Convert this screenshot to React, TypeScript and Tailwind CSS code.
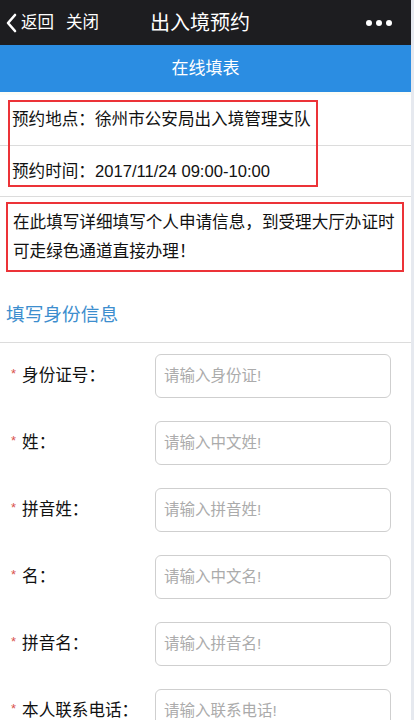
const fields = [
  { label: "身份证号：", placeholder: "请输入身份证!" },
  { label: "姓：", placeholder: "请输入中文姓!" },
  { label: "拼音姓：", placeholder: "请输入拼音姓!" },
  { label: "名：", placeholder: "请输入中文名!" },
  { label: "拼音名：", placeholder: "请输入拼音名!" },
  { label: "本人联系电话：", placeholder: "请输入联系电话!" },
  { label: "联系地址：", placeholder: "请输入联系地址!" },
];

export default function App() {
  return (
    <div
      className="flex min-h-screen bg-[#e6e9ef]"
      style={{ fontFamily: '"Liberation Sans", "Noto Sans CJK SC", sans-serif' }}
    >
      <div className="w-[411px] bg-white">
        {/* top nav */}
        <header className="relative flex h-[45px] items-center bg-[#1d1d20] text-white">
          <div className="flex items-center pl-[5px]">
            <svg width="13" height="20" viewBox="0 0 13 20" className="mr-[3px]">
              <path d="M10 2 L3 10 L10 18" fill="none" stroke="white" strokeWidth="2.6" strokeLinecap="round" strokeLinejoin="round" />
            </svg>
            <span className="text-[16.5px] leading-none">返回</span>
            <span className="ml-[12px] text-[16.5px] leading-none">关闭</span>
          </div>
          <h1 className="absolute left-[150px] text-[20px] leading-none">出入境预约</h1>
          <div className="ml-auto mr-[19px] flex gap-[4px]">
            <span className="h-[6px] w-[6px] rounded-full bg-white" />
            <span className="h-[6px] w-[6px] rounded-full bg-white" />
            <span className="h-[6px] w-[6px] rounded-full bg-white" />
          </div>
        </header>

        <div className="flex h-[47px] items-center justify-center bg-[#2b8de2] text-[17px] text-white">
          在线填表
        </div>
        <div className="h-[3px] bg-[#fdfdf6]" />

        {/* appointment info */}
        <div className="relative">
          <div className="flex h-[51px] items-center border-b border-[#dcdcdc] pl-[12px] text-[16.6px] text-[#111]">
            预约地点：徐州市公安局出入境管理支队
          </div>
          <div className="flex h-[51px] items-center border-b border-[#dcdcdc] pl-[12px] pt-[3px] text-[16.6px] text-[#111]">
            预约时间：2017/11/24 09:00-10:00
          </div>
          <div className="absolute left-[8px] top-[5px] h-[87px] w-[310px] border-2 border-[#ec3338]" />
        </div>

        <div className="ml-[6px] mr-[7px] mt-[5px] border-2 border-[#ec3338] py-[4px] pl-[5px] text-[16.6px] leading-[29px] text-[#111]">
          在此填写详细填写个人申请信息，到受理大厅办证时可走绿色通道直接办理！
        </div>

        {/* section title */}
        <div className="flex h-[71px] items-end border-b border-[#dcdcdc] pb-[17px] pl-[6px] text-[18.7px] leading-none text-[#3d8ece]">
          填写身份信息
        </div>

        <div className="pt-[11px]">
          {fields.map((f) => (
            <div key={f.label} className="mb-[23px] flex h-[44px] items-center">
              <div className="flex w-[155px] items-center pl-[11px]">
                <span className="mr-[6px] -mt-[4px] text-[13px] text-[#d9534f]">*</span>
                <span className="text-[16.6px] text-[#111]">{f.label}</span>
              </div>
              <div className="flex h-[44px] w-[236px] items-center rounded-[6px] border border-[#cfcfcf] pl-[8px] text-[15.5px] text-[#ababab]">
                {f.placeholder}
              </div>
            </div>
          ))}
        </div>
      </div>
    </div>
  );
}
